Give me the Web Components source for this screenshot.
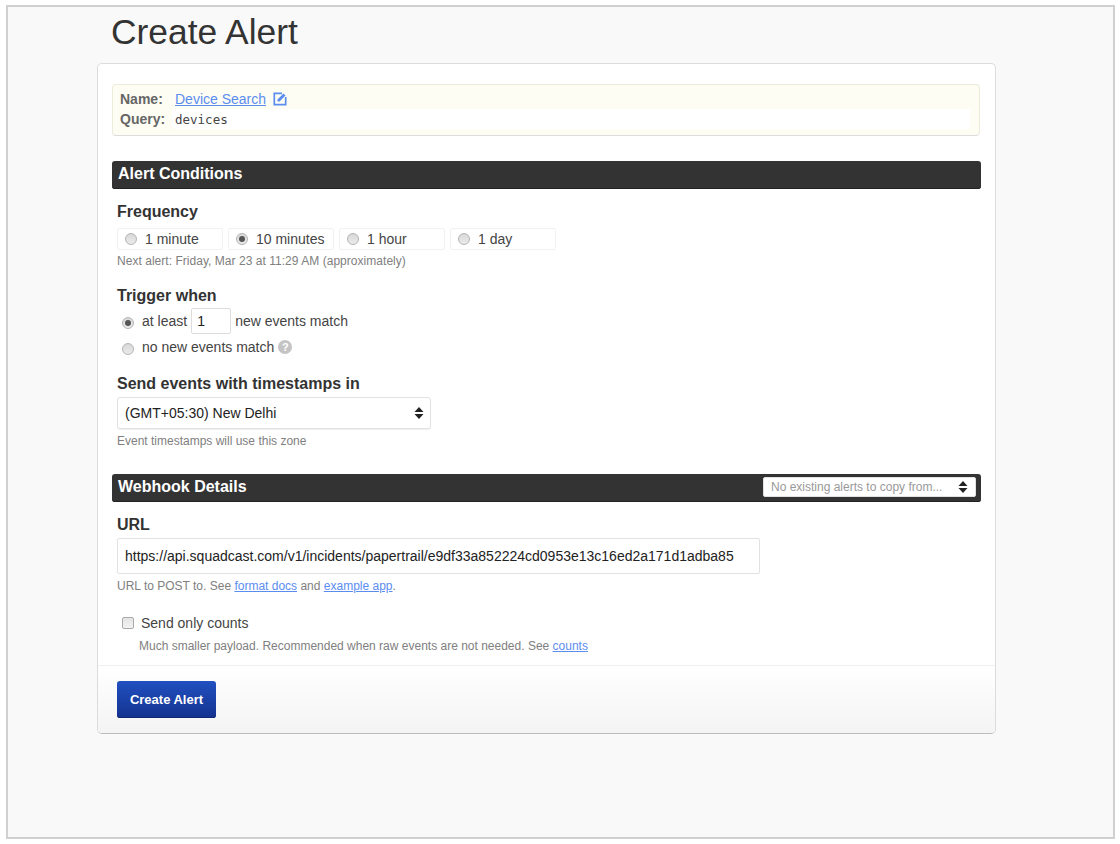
<!DOCTYPE html>
<html>
<head>
<meta charset="utf-8">
<title>Create Alert</title>
<style>
  html, body { margin: 0; background: #fff; }
  body { font-family: "Liberation Sans", Arial, sans-serif; color: #333; }
</style>
</head>
<body>

<alert-page>
  <alert-form></alert-form>
</alert-page>

<script>
const radioCss = `
  .radio { display: inline-block; box-sizing: border-box; width: 12px; height: 12px; border-radius: 50%;
    border: 1px solid #b4b4b4; background: linear-gradient(#d8d8d8, #ebebeb); flex: none; position: relative; }
  .radio.on::after { content: ''; position: absolute; left: 2px; top: 2px; width: 6px; height: 6px;
    border-radius: 50%; background: #555; }
`;

class AlertPage extends HTMLElement {
  constructor() {
    super();
    this.attachShadow({ mode: 'open' });
    this.shadowRoot.innerHTML = `
      <style>
        :host { display: block; box-sizing: border-box; width: 1109px; height: 834px; margin: 5px 0 0 6px;
          border: 2px solid #d0d0d0; background: #f9f9f9; overflow: hidden; }
        h1 { margin: 0; height: 56px; padding-left: 103px; font-size: 35.4px; font-weight: 400; line-height: 50px; color: #333; }
        .wrap { padding-left: 89px; }
      </style>
      <h1>Create Alert</h1>
      <div class="wrap"><slot></slot></div>
    `;
  }
}

class SectionBar extends HTMLElement {
  constructor() {
    super();
    this.attachShadow({ mode: 'open' });
    this.shadowRoot.innerHTML = `
      <style>
        :host { display: flex; align-items: center; justify-content: space-between; box-sizing: border-box;
          height: 28px; width: 869px; padding: 0 5px 2px 6px; background: #333; border-radius: 3px;
          box-shadow: inset 0 -1px 0 #222; color: #fff; font-size: 16px; font-weight: 700; }
      </style>
      <span>${this.getAttribute('label') || ''}</span>
      <slot></slot>
    `;
  }
}

class FreqOption extends HTMLElement {
  constructor() {
    super();
    this.attachShadow({ mode: 'open' });
    this.shadowRoot.innerHTML = `
      <style>
        ${radioCss}
        :host { display: flex; align-items: center; gap: 8px; box-sizing: border-box; width: 106px; height: 22px;
          padding-left: 7px; border: 1px solid #f1f1f1; border-radius: 2px; background: #fff;
          font-size: 14px; color: #444; }
      </style>
      <span class="radio ${this.hasAttribute('checked') ? 'on' : ''}"></span>
      <span><slot></slot></span>
    `;
  }
}

class SelectBox extends HTMLElement {
  constructor() {
    super();
    this.attachShadow({ mode: 'open' });
    this.shadowRoot.innerHTML = `
      <style>
        :host { display: flex; align-items: center; justify-content: space-between; box-sizing: border-box;
          background: #fff; border: 1px solid #e2e2e2; border-radius: 3px; }
        svg { display: block; flex: none; }
      </style>
      <span><slot></slot></span>
      <svg width="10" height="14" viewBox="0 0 10 14"><path fill="#222" d="M5 1 9.5 6H.5zM5 13 .5 8h9z"/></svg>
    `;
  }
}

class AlertForm extends HTMLElement {
  constructor() {
    super();
    this.attachShadow({ mode: 'open' });
    this.shadowRoot.innerHTML = `
      <style>
        ${radioCss}
        :host { display: flex; flex-direction: column; box-sizing: border-box; width: 899px; height: 671px; background: #fff;
          border: 1px solid #dcdcdc; border-bottom-color: #bbb; border-radius: 5px; overflow: hidden; font-size: 14px; }
        a { color: #5b8def; }
        .body { flex: 1; padding: 20px 15px 0 14px; }
        .saved { box-sizing: border-box; width: 868px; height: 52px; background: #fdfdf4; border: 1px solid #ececdc;
          border-bottom-color: #ddd; border-radius: 4px; padding: 4px 8px 0 7px; margin-bottom: 25px; }
        .saved-row { display: flex; align-items: center; height: 20px; }
        .saved b { color: #666; width: 55px; flex: none; }
        .saved a { margin-right: 7px; }
        .saved svg { display: block; }
        .query { flex: 1; background: #fff; height: 20px; line-height: 21px; margin-left: -3px; padding-left: 3px; margin-right: 1px;
          font-family: "DejaVu Sans Mono", monospace; font-size: 12.5px; color: #444; border-radius: 2px; }
        .group { padding-left: 5px; }
        h3 { margin: 0; font-size: 16px; font-weight: 700; color: #333; line-height: 20px; }
        .freq { margin-top: 6px; display: flex; gap: 5px; }
        .hint { font-size: 12px; color: #808080; line-height: 16px; }
        .trigger-row { display: flex; align-items: center; color: #444; }
        .trigger-row .radio { margin: 0 8px 0 5px; position: relative; top: 2px; }
        .count { box-sizing: border-box; width: 40px; height: 26px; margin: 0 4px; border: 1px solid #ddd; border-radius: 2px;
          padding-left: 5px; line-height: 24px; font-size: 14px; color: #222; }
        .help { display: inline-block; width: 14px; height: 14px; margin-left: 4px; border-radius: 50%; background: #c4c4c4;
          color: #fff; font-size: 11px; font-weight: 700; line-height: 14px; text-align: center; }
        .zone { width: 314px; height: 32px; padding: 0 6px 0 7px; margin-top: 3px; color: #222; box-shadow: 0 1px 1px #f0f0f0; }
        .copy { width: 213px; height: 20px; padding: 0 7px; font-size: 12px; font-weight: 400; color: #999; border-radius: 2px; }
        .url { box-sizing: border-box; width: 643px; height: 36px; margin-top: 3px; padding-left: 7px; line-height: 34px;
          border: 1px solid #e2e2e2; border-radius: 2px; color: #222; }
        .check-row { display: flex; align-items: center; color: #444; padding-left: 5px; }
        .check { box-sizing: border-box; width: 12px; height: 12px; margin-right: 7px; border: 1px solid #aaa; border-radius: 2px;
          background: linear-gradient(#e4e4e4, #f2f2f2); }
        .foot { height: 68px; box-sizing: border-box; border-top: 1px solid #f0f0f0; padding: 15px 0 0 19px;
          background: linear-gradient(#fff, #f4f4f4); }
        .btn { box-sizing: border-box; width: 99px; height: 37px; display: flex; align-items: center; justify-content: center;
          border-radius: 3px; background: linear-gradient(#2150c0, #14328f); box-shadow: inset 0 -1px 0 #0f2670;
          color: #fff; font-size: 13px; font-weight: 700; }
      </style>
      <div class="body">
        <div class="saved">
          <div class="saved-row"><b>Name:</b><a href="#">Device Search</a>
            <svg width="14" height="14" viewBox="0 0 14 14"><path fill="none" stroke="#5b8def" stroke-width="1.7" d="M9 1.3H1.3V12.7H12.7V5"/><path fill="#5b8def" d="M4.5 9.5V7.4L10.4 1.5l2.1 2.1L6.6 9.5z"/></svg>
          </div>
          <div class="saved-row"><b>Query:</b><span class="query">devices</span></div>
        </div>

        <section-bar label="Alert Conditions"></section-bar>

        <div class="group" style="margin-top:13px">
          <h3>Frequency</h3>
          <div class="freq">
            <freq-option>1 minute</freq-option>
            <freq-option checked>10 minutes</freq-option>
            <freq-option>1 hour</freq-option>
            <freq-option>1 day</freq-option>
          </div>
          <div class="hint" style="margin-top:3px;letter-spacing:.035px">Next alert: Friday, Mar 23 at 11:29 AM (approximately)</div>
        </div>

        <div class="group" style="margin-top:17px">
          <h3>Trigger when</h3>
          <div class="trigger-row" style="margin-top:2px"><span class="radio on"></span>at least<span class="count">1</span>new events match</div>
          <div class="trigger-row" style="margin-top:1px;height:23px"><span class="radio"></span>no new events match<span class="help">?</span></div>
        </div>

        <div class="group" style="margin-top:16px">
          <h3>Send events with timestamps in</h3>
          <select-box class="zone">(GMT+05:30) New Delhi</select-box>
          <div class="hint" style="margin-top:4px">Event timestamps will use this zone</div>
        </div>

        <section-bar label="Webhook Details" style="margin-top:25px">
          <select-box class="copy">No existing alerts to copy from...</select-box>
        </section-bar>

        <div class="group" style="margin-top:13px">
          <h3>URL</h3>
          <div class="url">https://api.squadcast.com/v1/incidents/papertrail/e9df33a852224cd0953e13c16ed2a171d1adba85</div>
          <div class="hint" style="margin-top:4px">URL to POST to. See <a href="#">format docs</a> and <a href="#">example app</a>.</div>
          <div class="check-row" style="margin-top:19px;height:20px"><span class="check"></span>Send only counts</div>
          <div class="hint" style="margin:5px 0 0 22px">Much smaller payload. Recommended when raw events are not needed. See <a href="#">counts</a></div>
        </div>
      </div>
      <div class="foot"><div class="btn">Create Alert</div></div>
    `;
  }
}

customElements.define('alert-page', AlertPage);
customElements.define('section-bar', SectionBar);
customElements.define('freq-option', FreqOption);
customElements.define('select-box', SelectBox);
customElements.define('alert-form', AlertForm);
</script>
</body>
</html>
